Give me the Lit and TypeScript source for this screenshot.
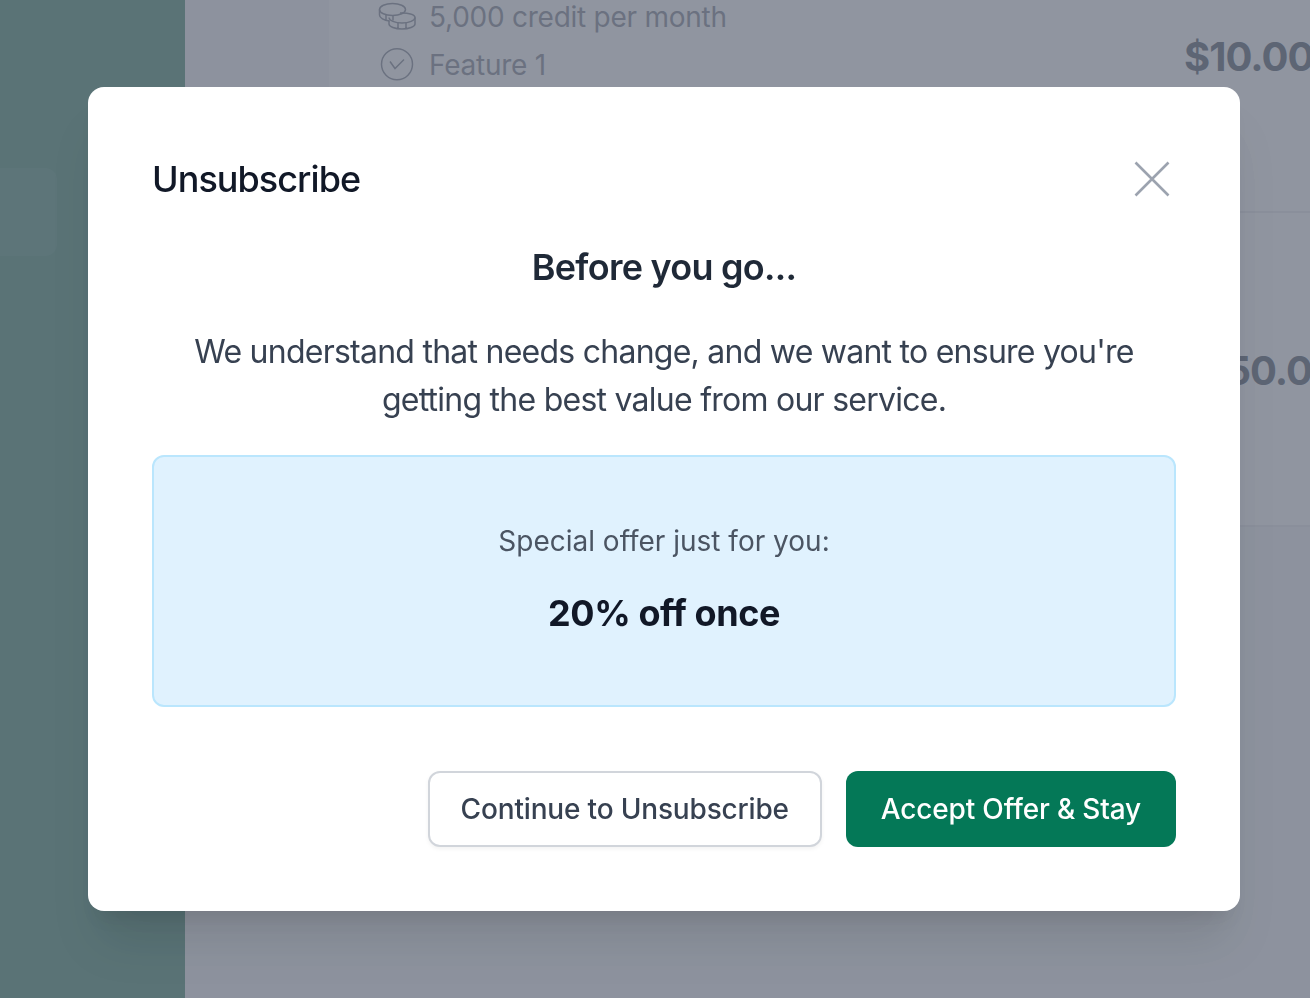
import { LitElement, html, css } from "lit";
import { customElement } from "lit/decorators.js";

@customElement("app-root")
export class AppRoot extends LitElement {
  static styles = css`
    :host { display: block; position: relative; height: 998px; overflow: hidden; font-family: Inter, "Liberation Sans", sans-serif; background: #f3f4f6; }
    * { box-sizing: border-box; }
    .page { display: flex; height: 998px; }
    .sidebar { flex: 0 0 185px; background: #28785a; padding-top: 168px; }
    .side-item { width: 57px; height: 88px; background: rgba(255,255,255,.07); border-radius: 0 12px 12px 0; }
    .main { flex: 1; min-width: 0; padding-left: 144px; overflow: hidden; }
    .list { width: 1100px; background: #fff; }
    .row { display: flex; border-bottom: 2px solid #e5e7eb; }
    .row.first { height: 213px; }
    .row.second { height: 314px; }
    .features { width: 855px; margin-top: -7px; padding-left: 48px; }
    .feature { display: flex; align-items: center; gap: 13px; height: 48px; font-size: 28px; letter-spacing: -.25px; color: #6b7280; }
    .feature svg { flex: none; width: 39px; height: 39px; stroke: #6b7280; fill: none; stroke-width: 1.5; }
    .price { font-size: 40px; font-weight: 700; letter-spacing: -1px; color: #374151; line-height: 48px; white-space: nowrap; }
    .first .price { margin-top: 33px; }
    .second .price { margin-top: 134px; }

    .overlay { position: absolute; inset: 0; background: rgba(107,114,128,.75); backdrop-filter: blur(.75px); display: flex; align-items: center; padding-left: 88px; }
    .modal { width: 1152px; height: 824px; padding: 64px; background: #fff; border-radius: 16px; box-shadow: 0 40px 50px -10px rgba(0,0,0,.1), 0 16px 20px -12px rgba(0,0,0,.1); display: flex; flex-direction: column; }
    .head { display: flex; justify-content: space-between; align-items: center; height: 56px; }
    h2 { margin: 0; font-size: 36px; line-height: 56px; font-weight: 500; letter-spacing: -.95px; color: #111827; }
    .close { width: 48px; height: 48px; padding: 0; border: 0; background: none; display: flex; align-items: center; justify-content: center; }
    .close svg { width: 48px; height: 48px; stroke: #9ca3af; stroke-width: 2.6; fill: none; }
    h3 { margin: 32px 0 0; text-align: center; font-size: 36px; line-height: 56px; font-weight: 600; letter-spacing: -.75px; color: #1f2937; }
    p.lead { margin: 33px 0 0; text-align: center; font-size: 32px; line-height: 48px; letter-spacing: -.75px; color: #374151; }
    .offer { margin-top: 31px; height: 252px; border: 2px solid #bae6fd; border-radius: 12px; background: #e0f2fe; padding: 64px; text-align: center; }
    .offer .label { font-size: 28px; line-height: 40px; color: #4b5563; }
    .offer .deal { margin-top: 24px; font-size: 36px; line-height: 56px; font-weight: 700; letter-spacing: -.42px; color: #111827; }
    .actions { margin-top: 64px; display: flex; justify-content: flex-end; gap: 24px; }
    button.btn { font: 500 28px/40px Inter, "Liberation Sans", sans-serif; letter-spacing: -.17px; padding: 16px 33px; border-radius: 12px; border: 2px solid transparent; height: 76px; }
    button.ghost { background: #fff; border-color: #d1d5db; color: #374151; box-shadow: 0 2px 4px rgba(0,0,0,.05); padding: 16px 31px; }
    .primary { background: #047857; color: #fff; }
  `;

  render() {
    return html`
      <div class="page">
        <aside class="sidebar"><div class="side-item"></div></aside>
        <main class="main">
          <div class="list">
            <div class="row first">
              <div class="features">
                <div class="feature">
                  <svg viewBox="0 0 39 39"><ellipse cx="15.500" cy="11.500" rx="13" ry="6"/><path d="M2.500 11.500v5.500c0 3 4.500 5.500 10 6M9 17v5.500M16 17.500v5"/><path d="M23 15c8 -.5 15 1.500 15 4.500s-6 5.500-13 5.500-13-2.500-13-5.500"/><path d="M12 22.500v3.500c0 2.800 6 5 13 5s13-2.200 13-5v-6.500M21 25v6M29 25v6"/></svg>
                  <span>5,000 credit per month</span>
                </div>
                <div class="feature">
                  <svg viewBox="0 0 39 39"><circle cx="20" cy="18.300" r="15.500"/><path d="M13 15.500l5 7 9-9"/></svg>
                  <span>Feature 1</span>
                </div>
              </div>
              <div class="price">$10.00</div>
            </div>
            <div class="row second">
              <div class="features"></div>
              <div class="price">$150.00</div>
            </div>
          </div>
        </main>
      </div>
      <div class="overlay">
        <div class="modal" role="dialog">
          <div class="head">
            <h2>Unsubscribe</h2>
            <button class="close" aria-label="Close">
              <svg viewBox="0 0 48 48"><path d="M7.500 7.500l33 33M40.500 7.500l-33 33"/></svg>
            </button>
          </div>
          <h3>Before you go...</h3>
          <p class="lead">We understand that needs change, and we want to ensure you're getting the best value from our service.</p>
          <div class="offer">
            <div class="label">Special offer just for you:</div>
            <div class="deal">20% off once</div>
          </div>
          <div class="actions">
            <button class="btn ghost">Continue to Unsubscribe</button>
            <button class="btn primary">Accept Offer &amp; Stay</button>
          </div>
        </div>
      </div>
    `;
  }
}
